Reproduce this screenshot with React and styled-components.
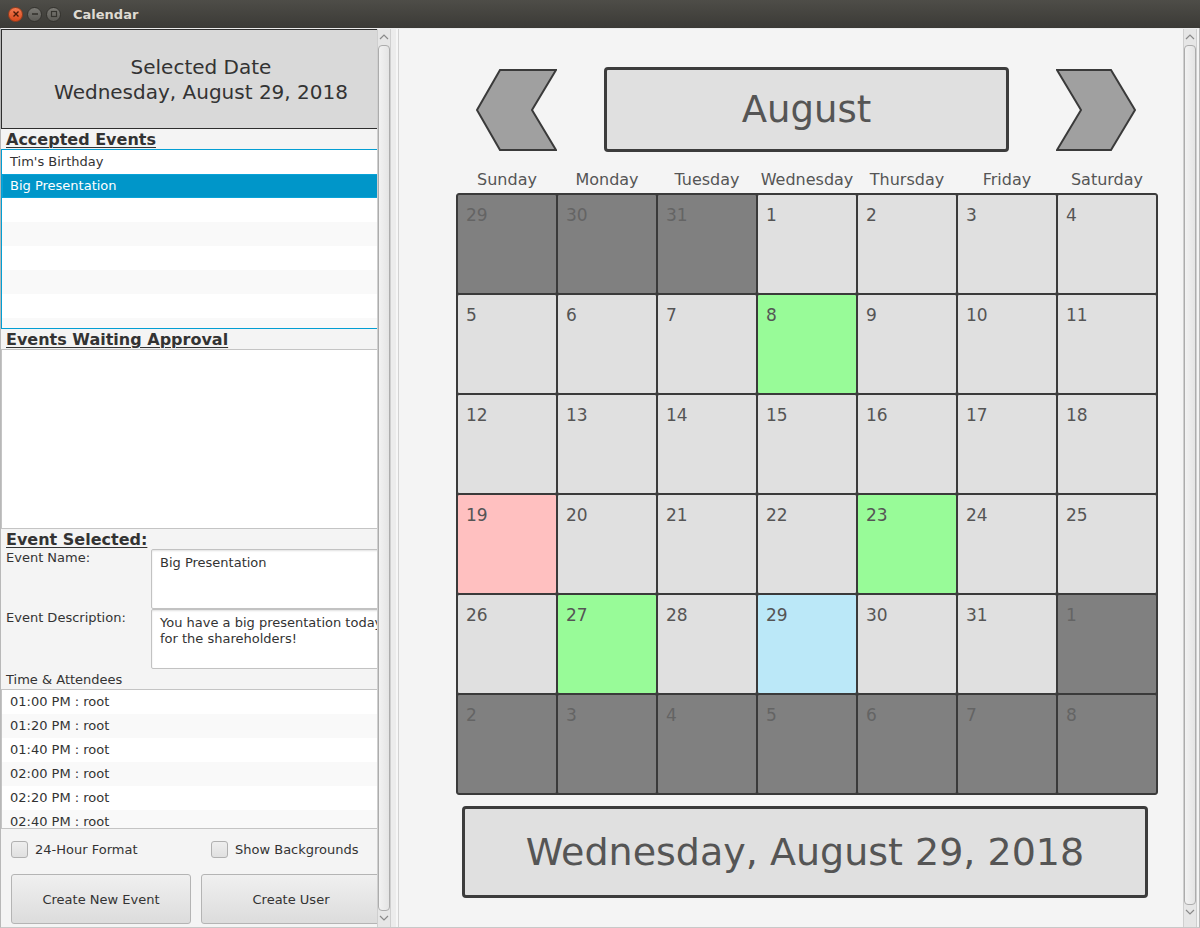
import React from 'react';
import styled, { createGlobalStyle } from 'styled-components';

const GlobalStyle = createGlobalStyle`
  html, body { margin: 0; padding: 0; background: #f4f4f4; }
  body { font-family: "DejaVu Sans", "Liberation Sans", sans-serif; }
  * { box-sizing: border-box; }
`;

const Window = styled.div`
  width: 1200px;
  height: 928px;
  display: flex;
  flex-direction: column;
  overflow: hidden;
  background: #f4f4f4;
`;

const TitleBar = styled.div`
  height: 28px;
  flex: none;
  display: flex;
  align-items: center;
  padding-left: 8px;
  background: linear-gradient(#4e4d48, #3b3a36);
`;

const WinButton = styled.div`
  width: 15px;
  height: 15px;
  border-radius: 50%;
  margin-right: 4px;
  display: flex;
  align-items: center;
  justify-content: center;
  background: ${p => (p.$close ? 'linear-gradient(#f37a51, #d9491c)' : 'linear-gradient(#7b7a75, #5b5a55)')};
  border: 1px solid ${p => (p.$close ? '#9a3d1c' : '#34332f')};
`;

const WinTitle = styled.div`
  margin-left: 8px;
  font-family: "DejaVu Sans", sans-serif;
  font-weight: bold;
  font-size: 13px;
  color: #dfdbd2;
`;

const Body = styled.div`
  flex: 1;
  min-height: 0;
  display: flex;
  padding-top: 1px;
  background: #ececec;
  border-left: 1px solid #b8b8b8;
  border-right: 1px solid #b8b8b8;
  border-bottom: 1px solid #c8c8c8;
`;

const LeftViewport = styled.div`
  width: 376px;
  flex: none;
  overflow: hidden;
  background: #f4f4f4;
`;

const LeftContent = styled.div`
  width: 400px;
  display: flex;
  flex-direction: column;
  color: #333;
`;

const DateHeader = styled.div`
  height: 100px;
  border: 1px solid #2e2e2e;
  background: #d9d9d9;
  display: flex;
  flex-direction: column;
  align-items: center;
  justify-content: center;
  font-size: 20px;
  line-height: 25px;
  color: #333;
  padding-top: 2px;
`;

const SectionTitle = styled.div`
  height: 20px;
  padding-left: 5px;
  padding-top: 1px;
  font-weight: bold;
  font-size: 16px;
  line-height: 19px;
  color: #333;
  text-decoration: underline;
  text-underline-offset: 2px;
  text-decoration-thickness: 1px;
`;

const List = styled.div`
  height: ${p => p.$h}px;
  border: 1px solid ${p => (p.$focused ? '#039ed3' : '#c4c4c4')};
  background: #fff;
  overflow: hidden;
`;

const Row = styled.div`
  height: 24px;
  line-height: 24px;
  padding-left: 8px;
  font-size: 13px;
  color: ${p => (p.$selected ? '#fff' : '#333')};
  background: ${p => (p.$selected ? '#0096c9' : p.$odd ? '#f9f9f9' : '#fff')};
  box-shadow: ${p => (p.$selected ? 'inset 0 0 0 1px #0aa3d8' : 'none')};
`;

const FormRow = styled.div`
  height: 60px;
  display: flex;
`;

const FormLabel = styled.div`
  width: 150px;
  flex: none;
  padding-left: 5px;
  padding-top: 1px;
  font-size: 13px;
  line-height: 16px;
  color: #333;
`;

const TextArea = styled.div`
  flex: 1;
  background: #fff;
  border: 1px solid #c2c2c2;
  border-radius: 2px;
  box-shadow: inset 0 1px 2px rgba(0, 0, 0, 0.12);
  padding: 5px 8px;
  font-size: 13px;
  line-height: 16px;
  color: #333;
  white-space: nowrap;
  overflow: hidden;
`;

const SmallLabel = styled.div`
  height: 20px;
  padding-left: 5px;
  padding-top: 1px;
  font-size: 13px;
  line-height: 19px;
  color: #333;
`;

const CheckRow = styled.div`
  height: 40px;
  display: flex;
  align-items: center;
  padding-left: 10px;
`;

const CheckItem = styled.label`
  width: 200px;
  flex: none;
  display: flex;
  align-items: center;
  gap: 7px;
  font-size: 13px;
  color: #333;
`;

const CheckBox = styled.span`
  width: 17px;
  height: 17px;
  flex: none;
  border: 1px solid #b0b0b0;
  border-radius: 3px;
  background: linear-gradient(#eeeeee, #e0e0e0);
`;

const ButtonRow = styled.div`
  display: flex;
  gap: 10px;
  padding-left: 10px;
  margin-top: 5px;
`;

const Button = styled.button`
  width: 180px;
  height: 50px;
  flex: none;
  border: 1px solid #b4b4b4;
  border-radius: 3px;
  background: linear-gradient(#f0f0f0, #dcdcdc);
  font-family: "DejaVu Sans", sans-serif;
  font-size: 13px;
  color: #333;
  padding: 0;
`;

const ScrollBar = styled.div`
  width: 14px;
  flex: none;
  display: flex;
  flex-direction: column;
  background: #e6e6e6;
  border-left: 1px solid #cfcfcf;
  border-right: 1px solid #cfcfcf;
`;

const ScrollArrow = styled.div`
  height: ${p => p.$h || 16}px;
  flex: none;
  display: flex;
  align-items: ${p => (p.$down ? 'flex-start' : 'center')};
  padding-top: ${p => (p.$down ? 4 : 0)}px;
  justify-content: center;
`;

const Thumb = styled.div`
  flex: 1;
  border: 1px solid #acacac;
  border-radius: 4px;
  background: linear-gradient(90deg, #f2f2f2, #e4e4e4);
`;

const Divider = styled.div`
  width: 8px;
  flex: none;
  background: #ececec;
  border-right: 1px solid #d2d2d2;
  box-shadow: inset -2px 0 0 #f6f6f6;
`;

const RightPane = styled.div`
  flex: 1;
  background: #f4f4f4;
  padding: 38px 0 0 57px;
`;

const Calendar = styled.div`
  width: 702px;
  display: flex;
  flex-direction: column;
`;

const TopRow = styled.div`
  display: flex;
  align-items: center;
  gap: 47px;
  padding-left: 20px;
`;

const MonthBox = styled.div`
  width: 405px;
  height: 85px;
  border: 3px solid #3c3c3c;
  border-radius: 4px;
  background: #e0e0e0;
  display: flex;
  align-items: center;
  justify-content: center;
  font-size: 37px;
  color: #555;
`;

const DayHeaders = styled.div`
  display: grid;
  grid-template-columns: repeat(7, 100px);
  padding-left: 1px;
  margin-top: 18px;
  height: 23px;
`;

const DayName = styled.div`
  text-align: center;
  font-size: 16px;
  line-height: 19px;
  color: #555;
`;

const Grid = styled.div`
  display: grid;
  grid-template-columns: repeat(7, 100px);
  grid-auto-rows: 100px;
  border: 1px solid #3a3a3a;
  border-radius: 3px;
  background: #3a3a3a;
`;

const cellBg = {
  in: '#e0e0e0',
  out: '#808080',
  green: '#98fb98',
  pink: '#ffc0c0',
  blue: '#bbe8f8',
};

const Cell = styled.div`
  border: 1px solid #3a3a3a;
  border-radius: 2px;
  background: ${p => cellBg[p.$kind]};
  padding: 10px 0 0 8px;
  font-size: 17px;
  line-height: 20px;
  color: ${p => (p.$kind === 'out' ? '#646464' : '#555')};
`;

const DateBox = styled.div`
  width: 686px;
  height: 92px;
  margin: 11px 0 0 6px;
  border: 3px solid #3c3c3c;
  border-radius: 4px;
  background: #e0e0e0;
  display: flex;
  align-items: center;
  justify-content: center;
  font-size: 38px;
  color: #555;
`;

const RightScrollWrap = styled.div`
  width: 16px;
  flex: none;
  display: flex;
  background: #f4f4f4;
`;

const Chevron = ({ down }) => (
  <svg width="10" height="6" viewBox="0 0 10 6">
    <polyline
      points={down ? '1,1 5,5 9,1' : '1,5 5,1 9,5'}
      fill="none"
      stroke="#8a8a8a"
      strokeWidth="1.2"
    />
  </svg>
);

const VScroll = ({ bottom = 16 }) => (
  <ScrollBar>
    <ScrollArrow>
      <Chevron />
    </ScrollArrow>
    <Thumb />
    <ScrollArrow $down $h={bottom}>
      <Chevron down />
    </ScrollArrow>
  </ScrollBar>
);

const accepted = ["Tim's Birthday", 'Big Presentation', '', '', '', '', '', ''];
const attendees = ['01:00 PM : root', '01:20 PM : root', '01:40 PM : root', '02:00 PM : root', '02:20 PM : root', '02:40 PM : root'];
const days = ['Sunday', 'Monday', 'Tuesday', 'Wednesday', 'Thursday', 'Friday', 'Saturday'];

const cells = [
  [29, 'out'], [30, 'out'], [31, 'out'], [1, 'in'], [2, 'in'], [3, 'in'], [4, 'in'],
  [5, 'in'], [6, 'in'], [7, 'in'], [8, 'green'], [9, 'in'], [10, 'in'], [11, 'in'],
  [12, 'in'], [13, 'in'], [14, 'in'], [15, 'in'], [16, 'in'], [17, 'in'], [18, 'in'],
  [19, 'pink'], [20, 'in'], [21, 'in'], [22, 'in'], [23, 'green'], [24, 'in'], [25, 'in'],
  [26, 'in'], [27, 'green'], [28, 'in'], [29, 'blue'], [30, 'in'], [31, 'in'], [1, 'out'],
  [2, 'out'], [3, 'out'], [4, 'out'], [5, 'out'], [6, 'out'], [7, 'out'], [8, 'out'],
];

const ArrowLeft = () => (
  <svg width="81" height="82" viewBox="0 0 81 82">
    <polygon points="1,41 24,1 80,1 56,41 80,81 24,81" fill="#a0a0a0" stroke="#3a3a3a" strokeWidth="2" strokeLinejoin="miter" />
  </svg>
);

const ArrowRight = () => (
  <svg width="81" height="82" viewBox="0 0 81 82">
    <polygon points="1,1 55,1 79,41 55,81 1,81 25,41" fill="#a0a0a0" stroke="#3a3a3a" strokeWidth="2" strokeLinejoin="miter" />
  </svg>
);

export default function App() {
  return (
    <Window>
      <GlobalStyle />
      <TitleBar>
        <WinButton $close>
          <svg width="8" height="8" viewBox="0 0 8 8">
            <path d="M1.5 1.5 L6.5 6.5 M6.5 1.5 L1.5 6.5" stroke="#4a1a08" strokeWidth="1.4" />
          </svg>
        </WinButton>
        <WinButton>
          <svg width="8" height="8" viewBox="0 0 8 8">
            <path d="M1 4 L7 4" stroke="#35342f" strokeWidth="1.6" />
          </svg>
        </WinButton>
        <WinButton>
          <svg width="8" height="8" viewBox="0 0 8 8">
            <rect x="1.5" y="1.5" width="5" height="5" fill="none" stroke="#35342f" strokeWidth="1.2" />
          </svg>
        </WinButton>
        <WinTitle>Calendar</WinTitle>
      </TitleBar>
      <Body>
        <LeftViewport>
          <LeftContent>
            <DateHeader>
              <div>Selected Date</div>
              <div>Wednesday, August 29, 2018</div>
            </DateHeader>
            <SectionTitle>Accepted Events</SectionTitle>
            <List $h={180} $focused>
              {accepted.map((t, i) => (
                <Row key={i} $odd={i % 2 === 1} $selected={i === 1}>{t}</Row>
              ))}
            </List>
            <SectionTitle>Events Waiting Approval</SectionTitle>
            <List $h={180} />
            <SectionTitle>Event Selected:</SectionTitle>
            <FormRow>
              <FormLabel>Event Name:</FormLabel>
              <TextArea>Big Presentation</TextArea>
            </FormRow>
            <FormRow>
              <FormLabel>Event Description:</FormLabel>
              <TextArea>
                You have a big presentation today
                <br />
                for the shareholders!
              </TextArea>
            </FormRow>
            <SmallLabel>Time &amp; Attendees</SmallLabel>
            <List $h={140}>
              {attendees.map((t, i) => (
                <Row key={i} $odd={i % 2 === 1}>{t}</Row>
              ))}
            </List>
            <CheckRow>
              <CheckItem><CheckBox />24-Hour Format</CheckItem>
              <CheckItem><CheckBox />Show Backgrounds</CheckItem>
            </CheckRow>
            <ButtonRow>
              <Button>Create New Event</Button>
              <Button>Create User</Button>
            </ButtonRow>
          </LeftContent>
        </LeftViewport>
        <VScroll bottom={16} />
        <Divider />
        <RightPane>
          <Calendar>
            <TopRow>
              <ArrowLeft />
              <MonthBox>August</MonthBox>
              <ArrowRight />
            </TopRow>
            <DayHeaders>
              {days.map(d => <DayName key={d}>{d}</DayName>)}
            </DayHeaders>
            <Grid>
              {cells.map(([n, k], i) => (
                <Cell key={i} $kind={k}>{n}</Cell>
              ))}
            </Grid>
            <DateBox>Wednesday, August 29, 2018</DateBox>
          </Calendar>
        </RightPane>
        <RightScrollWrap>
          <VScroll bottom={22} />
        </RightScrollWrap>
      </Body>
    </Window>
  );
}
